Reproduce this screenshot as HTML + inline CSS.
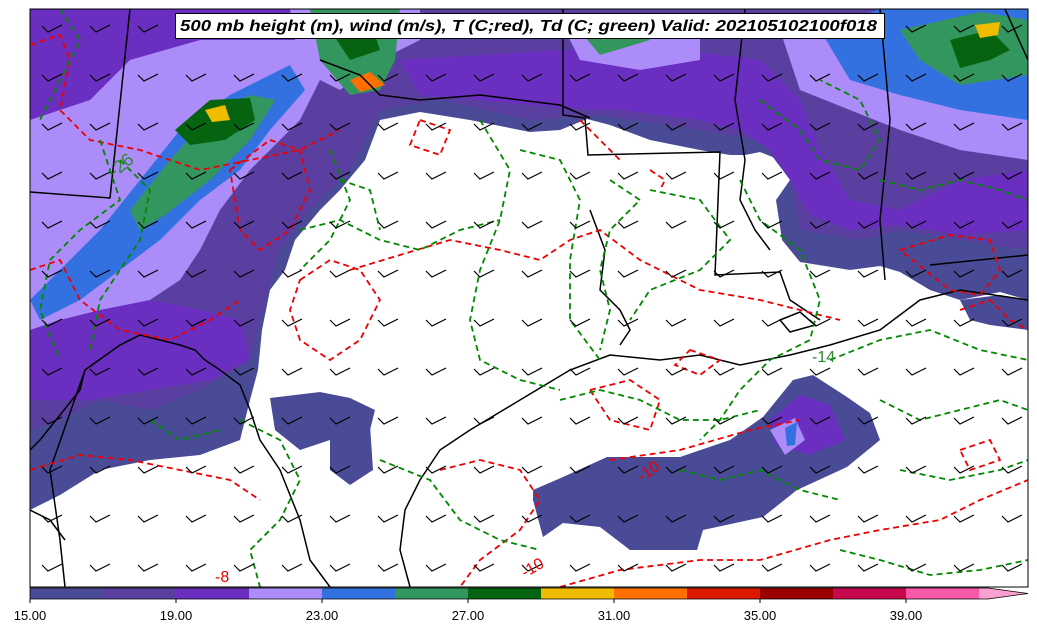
<!DOCTYPE html>
<html><head><meta charset="utf-8"><style>
html,body{margin:0;padding:0;background:#fff;width:1037px;height:633px;overflow:hidden}
svg{display:block}
text{font-family:"Liberation Sans",sans-serif}
</style></head><body>
<svg width="1037" height="633" viewBox="0 0 1037 633" xmlns="http://www.w3.org/2000/svg">
<defs>
<clipPath id="m"><rect x="30" y="9" width="998" height="578"/></clipPath>
<pattern id="b" x="40" y="20" width="48" height="49" patternUnits="userSpaceOnUse">
<path d="M2,6 L8,12 L22,5" fill="none" stroke="#000" stroke-width="1.2"/>
</pattern>
</defs>
<g clip-path="url(#m)">
<rect x="30" y="9" width="998" height="578" fill="#fff"/>
<!-- main precip region -->
<path fill="#494b96" d="M30,9 L1028,9 L1028,300 L1000,292 L960,300 L930,290 L900,272 L880,266 L850,270 L800,262 L782,240 L776,200 L790,180 L780,160 L760,152 L745,155 L730,155 L700,150 L650,140 L610,125 L587,119 L560,130 L530,132 L470,120 L420,112 L380,120 L365,160 L340,190 L320,210 L295,240 L285,270 L270,290 L262,330 L258,370 L250,400 L240,440 L200,455 L150,460 L100,470 L60,495 L30,510 Z"/>
<path fill="#5b3fa0" d="M30,9 L1028,9 L1028,250 L960,240 L900,230 L860,240 L800,230 L790,180 L760,140 L700,130 L600,115 L530,120 L440,100 L380,110 L350,170 L310,210 L280,250 L265,300 L250,360 L200,390 L150,410 L100,400 L60,420 L30,430 Z"/>
<path fill="#6a2ec0" d="M30,9 L330,9 L300,60 L250,90 L200,90 L130,110 L100,150 L60,190 L30,200 Z"/>
<path fill="#6a2ec0" d="M30,330 L90,310 L150,300 L200,310 L240,320 L250,360 L210,380 L150,390 L90,400 L30,400 Z"/>
<path fill="#6a2ec0" d="M400,60 L560,50 L680,50 L760,60 L800,100 L820,150 L850,200 L900,210 L960,180 L1028,170 L1028,230 L960,235 L900,225 L850,230 L810,215 L790,180 L770,150 L740,130 L700,120 L620,110 L560,108 L480,100 L420,95 Z"/>
<path fill="#ab8cf8" d="M30,120 L90,100 L130,60 L200,40 L300,40 L330,60 L300,120 L250,170 L220,210 L200,250 L180,280 L150,300 L100,310 L60,320 L30,330 Z"/>
<path fill="#3371e0" d="M30,300 L60,270 L100,230 L140,180 L180,130 L230,95 L290,65 L305,90 L270,130 L240,170 L200,200 L160,240 L120,270 L80,300 L40,320 Z"/>
<path fill="#33965e" d="M130,210 L170,160 L210,115 L250,95 L275,100 L250,140 L210,180 L165,215 L140,230 Z"/>
<path fill="#066410" d="M175,130 L210,100 L250,98 L255,120 L225,140 L190,145 Z"/>
<path fill="#f0bc00" d="M205,110 L225,105 L230,120 L212,122 Z"/>
<path fill="#ab8cf8" d="M290,9 L420,9 L420,40 L380,60 L340,90 L300,70 Z"/>
<path fill="#33965e" d="M310,9 L400,9 L395,60 L380,90 L350,95 L320,60 Z"/>
<path fill="#066410" d="M330,30 L370,20 L380,50 L350,60 Z"/>
<path fill="#ff7000" d="M350,80 L370,72 L385,85 L360,92 Z"/>
<path fill="#ab8cf8" d="M560,20 L700,20 L700,60 L640,70 L580,60 Z"/>
<path fill="#33965e" d="M575,25 L630,18 L650,40 L600,55 Z"/>
<path fill="#ab8cf8" d="M780,30 L880,20 L1028,30 L1028,160 L960,150 L900,130 L850,110 L800,90 Z"/>
<path fill="#3371e0" d="M820,30 L880,9 L1028,9 L1028,120 L960,110 L900,95 L850,80 Z"/>
<path fill="#33965e" d="M900,30 L980,12 L1028,20 L1028,75 L960,85 L920,60 Z"/>
<path fill="#066410" d="M950,40 L990,30 L1010,50 L990,60 L960,68 Z"/>
<path fill="#f0bc00" d="M975,25 L1000,22 L998,35 L980,38 Z"/>
<!-- small blobs -->
<path fill="#494b96" d="M270,398 L320,392 L350,398 L375,410 L370,430 L330,440 L300,450 L275,430 Z"/>
<path fill="#494b96" d="M330,430 L370,425 L373,470 L350,485 L330,470 Z"/>
<path fill="#494b96" d="M960,300 L1000,295 L1028,300 L1028,330 L990,325 L970,320 Z"/>
<!-- bottom right blob -->
<path fill="#494b96" d="M533,490 L563,477 L607,457 L680,457 L730,440 L763,417 L793,380 L813,375 L847,397 L870,413 L880,440 L847,467 L797,490 L763,517 L703,530 L697,550 L630,550 L600,527 L563,523 L543,537 L533,500 Z"/>
<path fill="#6a2ec0" d="M770,420 L800,395 L830,405 L845,440 L810,455 L775,445 Z"/>
<path fill="#ab8cf8" d="M770,430 L795,418 L805,440 L785,455 Z"/>
<path fill="#3371e0" d="M785,428 L797,422 L795,445 L787,446 Z"/>
<!-- boundaries -->
<g fill="none" stroke="#000" stroke-width="1.5">
<path d="M130,9 L110,198 L30,192"/>
<path d="M30,450 L40,440 L80,390 L85,370 L120,345 L140,335 L180,345 L195,350 L205,360 L220,370 L240,385 L250,410 L260,440 L280,470 L300,520 L310,560 L330,587"/>
<path d="M80,385 L85,370 L50,470 L60,540 L65,587"/>
<path d="M30,510 L50,520 L65,540"/>
<path d="M320,60 L360,75 L380,95 L420,100 L480,95 L560,105 L590,118"/>
<path d="M563,9 L563,115 L585,118 L588,155 L720,152 L715,275 L780,272 L790,300 L820,320"/>
<path d="M745,9 L735,100 L745,160 L740,200 L755,230 L770,250"/>
<path d="M880,9 L890,120 L880,220 L885,280"/>
<path d="M1005,9 L1028,60"/>
<path d="M930,265 L1028,255"/>
<path d="M590,210 L605,250 L600,290 L620,310 L630,330 L620,345"/>
<path d="M470,430 L520,400 L570,370 L610,355 L660,360 L700,355 L740,365 L790,355 L830,345 L880,330 L920,300 L960,290 L1028,300"/>
<path d="M470,430 L440,450 L420,480 L405,510 L400,550 L410,587"/>
<path d="M780,320 L800,312 L815,325 L790,332 Z"/>
</g>
<!-- contours -->
<g fill="none" stroke="#e00" stroke-width="1.8" stroke-dasharray="6,4">
<path d="M30,45 L60,35 L70,60 L60,110 L90,140 L140,150 L200,170 L250,160 L300,150 L340,130"/>
<path d="M30,270 L60,260 L80,300 L120,330 L170,340 L210,320 L240,300"/>
<path d="M230,170 L270,140 L300,150 L310,190 L290,230 L260,250 L240,230 Z"/>
<path d="M420,120 L450,130 L440,155 L410,145 Z"/>
<path d="M300,280 L330,260 L360,270 L380,300 L360,340 L330,360 L300,340 L290,310 Z"/>
<path d="M350,270 L400,255 L450,240 L500,250 L540,260 L570,240 L600,230 L640,260 L700,290 L760,300 L800,310 L840,320"/>
<path d="M30,470 L80,455 L130,460 L180,470 L230,480 L260,500"/>
<path d="M440,470 L480,460 L520,470 L540,500 L520,530 L480,560 L460,587"/>
<path d="M590,390 L630,380 L660,400 L650,430 L610,420 Z"/>
<path d="M560,587 L620,570 L700,560 L760,560 L830,540 L880,530 L940,520 L980,500 L1028,480"/>
<path d="M900,250 L950,235 L990,240 L1000,270 L980,295 L950,290 Z"/>
<path d="M960,310 L990,300 L1010,320 L1028,330"/>
<path d="M690,350 L720,360 L700,375 L675,365 Z"/>
<path d="M960,450 L990,440 L1000,460 L970,470 Z"/>
<path d="M610,460 L680,450 L750,430 L800,420"/>
<path d="M580,120 L600,140 L620,160"/>
<path d="M650,170 L665,180 L660,190"/>
</g>
<g fill="none" stroke="#080" stroke-width="1.8" stroke-dasharray="6,4">
<path d="M60,9 L80,40 L60,80 L40,120"/>
<path d="M100,140 L120,200 L80,230 L50,260 L40,310 L60,360"/>
<path d="M120,160 L150,190 L140,240 L100,300 L90,350"/>
<path d="M330,150 L350,200 L330,240 L300,270"/>
<path d="M340,180 L370,190 L380,230"/>
<path d="M300,230 L340,220 L380,240 L420,250 L460,230 L500,220"/>
<path d="M480,120 L510,170 L500,220 L480,270 L470,320 L480,360 L520,380 L560,390"/>
<path d="M520,150 L560,160 L580,200 L570,260 L570,320 L600,360"/>
<path d="M610,180 L640,200 L610,230 L600,270 L610,310 L600,350"/>
<path d="M650,190 L700,200 L730,240 L700,270 L650,290 L630,320"/>
<path d="M740,180 L760,220 L800,250 L820,300 L810,340 L770,360 L740,390 L720,420 L700,440"/>
<path d="M760,100 L800,130 L820,160 L860,170 L880,140 L860,100 L820,80"/>
<path d="M880,180 L920,190 L960,180 L1000,190 L1028,200"/>
<path d="M240,420 L280,440 L300,480 L280,520 L250,550 L260,587"/>
<path d="M150,420 L180,440 L220,430"/>
<path d="M380,460 L430,480 L460,520 L500,540 L540,550"/>
<path d="M560,400 L600,390 L640,400 L680,420 L720,420 L760,410"/>
<path d="M830,360 L880,340 L930,330 L980,350 L1028,360"/>
<path d="M880,400 L920,420 L960,410 L1000,400 L1028,410"/>
<path d="M900,470 L950,480 L1000,470 L1028,460"/>
<path d="M840,550 L880,560 L930,575 L980,570 L1028,560"/>
<path d="M680,470 L720,480 L760,470 L800,490 L840,500"/>
</g>
<rect x="30" y="9" width="998" height="578" fill="url(#b)"/>
<text x="115" y="178" fill="#2a8a2a" font-size="18" transform="rotate(-40 115 178)">-26</text>
<text x="812" y="362" fill="#2a8a2a" font-size="16">-14</text>
<text x="215" y="582" fill="#e00" font-size="16">-8</text>
<text x="525" y="578" fill="#e00" font-size="16" transform="rotate(-30 525 578)">-10</text>
<text x="642" y="482" fill="#e00" font-size="16" transform="rotate(-35 642 482)">-10</text>
</g>
<rect x="30" y="9" width="998" height="578" fill="none" stroke="#000" stroke-width="1"/>
<!-- title -->
<rect x="175.5" y="13.5" width="709" height="25" fill="#fff" stroke="#000"/>
<text x="180" y="31" font-size="15.5" font-weight="bold" font-style="italic" fill="#000" textLength="697" lengthAdjust="spacingAndGlyphs">500 mb height (m), wind (m/s), T (C;red), Td (C; green) Valid: 202105102100f018</text>
<!-- colorbar -->
<g>
<rect x="30" y="588" width="73" height="11" fill="#494b96"/>
<rect x="103" y="588" width="73" height="11" fill="#5b3fa0"/>
<rect x="176" y="588" width="73" height="11" fill="#6a2ec0"/>
<rect x="249" y="588" width="73" height="11" fill="#ab8cf8"/>
<rect x="322" y="588" width="73" height="11" fill="#3371e0"/>
<rect x="395" y="588" width="73" height="11" fill="#33965e"/>
<rect x="468" y="588" width="73" height="11" fill="#066410"/>
<rect x="541" y="588" width="73" height="11" fill="#f0bc00"/>
<rect x="614" y="588" width="73" height="11" fill="#ff7000"/>
<rect x="687" y="588" width="73" height="11" fill="#dd1800"/>
<rect x="760" y="588" width="73" height="11" fill="#9b0000"/>
<rect x="833" y="588" width="73" height="11" fill="#c8084e"/>
<rect x="906" y="588" width="73" height="11" fill="#f858a8"/>
<path d="M979,588 L988,588 L1028,593.5 L988,599 L979,599 Z" fill="#f8a0d0"/>
<path d="M30,588 L988,588 L1028,593.5 L988,599 L30,599 Z" fill="none" stroke="#000" stroke-width="0.8"/>
</g>
<g font-size="13" fill="#000" text-anchor="middle">
<line x1="30" y1="599" x2="30" y2="603" stroke="#000"/><text x="30" y="620">15.00</text>
<line x1="176" y1="599" x2="176" y2="603" stroke="#000"/><text x="176" y="620">19.00</text>
<line x1="322" y1="599" x2="322" y2="603" stroke="#000"/><text x="322" y="620">23.00</text>
<line x1="468" y1="599" x2="468" y2="603" stroke="#000"/><text x="468" y="620">27.00</text>
<line x1="614" y1="599" x2="614" y2="603" stroke="#000"/><text x="614" y="620">31.00</text>
<line x1="760" y1="599" x2="760" y2="603" stroke="#000"/><text x="760" y="620">35.00</text>
<line x1="906" y1="599" x2="906" y2="603" stroke="#000"/><text x="906" y="620">39.00</text>
</g>
</svg>
</body></html>
